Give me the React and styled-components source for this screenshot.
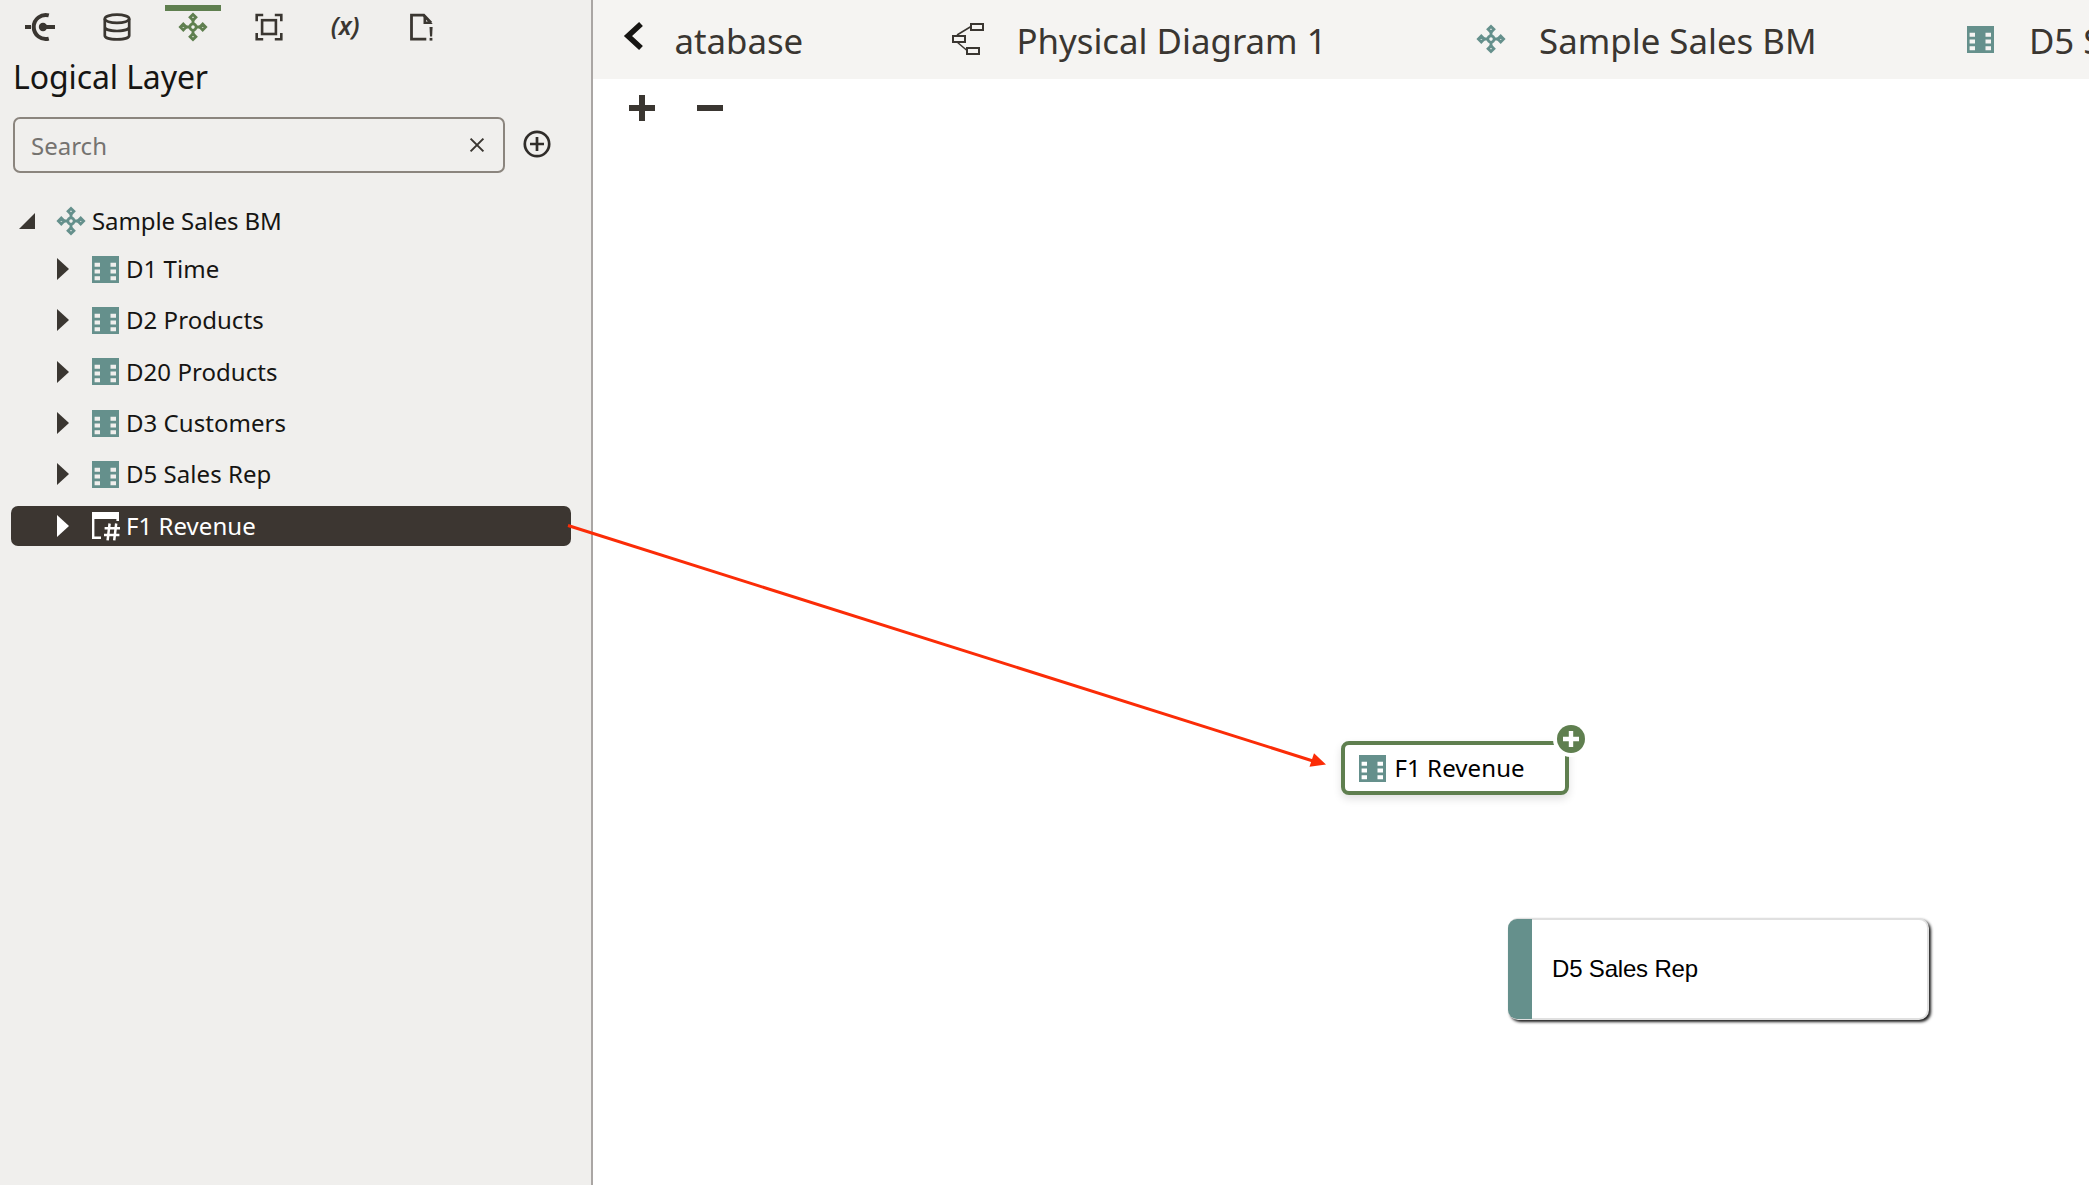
import React from "react";
import styled, { createGlobalStyle } from "styled-components";

const ink = "#3a3631";
const teal = "#65908c";
const green = "#5f7f4f";
const sans = `"Noto Sans", "Open Sans", sans-serif`;

const GlobalStyle = createGlobalStyle`
  * { box-sizing: border-box; }
  body { margin: 0; background: #fff; font-family: ${sans}; overflow: hidden; }
  svg { display: block; flex: none; overflow: visible; }
`;

const Page = styled.div`
  position: relative;
  display: flex;
  width: 2089px;
  height: 1185px;
  overflow: hidden;
`;

const Sidebar = styled.aside`
  flex: none;
  width: 593px;
  background: #f0efed;
  border-right: 2px solid #aaa6a4;
`;

const LayerTabs = styled.nav`
  display: flex;
  gap: 20.2px;
  height: 54px;
  padding: 5px 0 0 12.4px;
`;

const LayerTab = styled.div`
  display: flex;
  justify-content: center;
  width: 56px;
  height: 42px;
  padding-top: 1px;
  border-top: 6px solid ${(p) => (p.$active ? green : "transparent")};
`;

const Variable = styled.span`
  color: ${ink};
  font-size: 25px;
  font-style: italic;
  font-weight: 600;
  line-height: 27px;
`;

const Heading = styled.h1`
  margin: 0;
  padding-left: 13px;
  height: 63px;
  font-size: 32px;
  font-weight: 400;
  letter-spacing: -0.1px;
  line-height: 45px;
  color: #161513;
`;

const SearchRow = styled.div`
  display: flex;
  align-items: center;
  gap: 18px;
  height: 56px;
  padding-left: 13px;
`;

const SearchBox = styled.div`
  display: flex;
  align-items: center;
  justify-content: space-between;
  width: 492px;
  height: 56px;
  padding: 0 19px 0 16px;
  border: 2px solid #8b857e;
  border-radius: 7px;
  color: #757370;
  font-size: 24px;
`;

const AddButton = styled.div`
  padding-bottom: 2px;
`;

const Tree = styled.div`
  padding: 28px 20px 0 11px;
`;

const TreeRow = styled.div`
  display: flex;
  align-items: center;
  height: 40px;
  margin-bottom: ${(p) => (p.$root ? "8px" : "11.35px")};
  padding-left: ${(p) => (p.$root ? "8px" : "46px")};
  border-radius: 7px;
  font-size: 24px;
  letter-spacing: ${(p) => (p.$root ? "-0.1px" : "0.04px")};
  line-height: 40px;
  color: ${(p) => (p.$selected ? "#fff" : "#161513")};
  background: ${(p) => (p.$selected ? "#3c3631" : "transparent")};
`;

const Disclosure = styled.span`
  flex: none;
  width: ${(p) => (p.$root ? "38px" : "35px")};
  color: ${(p) => (p.$selected ? "#fff" : "#3a3631")};
`;

const RowIcon = styled.span`
  flex: none;
  width: ${(p) => (p.$root ? "35px" : "34px")};
`;

const Main = styled.main`
  flex: 1;
  min-width: 0;
`;

const TabBar = styled.header`
  display: flex;
  height: 79px;
  background: #f5f4f2;
`;

const BackButton = styled.div`
  flex: none;
  width: 80px;
  padding: 22px 0 0 31px;
`;

const TabStrip = styled.div`
  flex: 1;
  min-width: 0;
  display: flex;
  gap: 148.5px;
  overflow: hidden;
`;

const Tab = styled.div`
  flex: none;
  display: flex;
  gap: 32px;
  margin-left: ${(p) => (p.$scrolled ? "-24px" : "0")};
  padding-right: ${(p) => (p.$scrolled ? "0.7px" : "0")};
  color: ${ink};
  font-size: 34.8px;
  line-height: 81px;
  white-space: nowrap;
`;

const TabIcon = styled.span`
  display: flex;
  justify-content: center;
  align-items: center;
  width: 32px;
  height: 78px;
`;

const ZoomBar = styled.div`
  display: flex;
  gap: 42px;
  padding: 16px 0 0 36px;
`;

const NewNode = styled.div`
  position: absolute;
  left: 1341px;
  top: 741px;
  display: flex;
  align-items: center;
  gap: 8px;
  width: 228px;
  height: 54px;
  padding-left: 14.4px;
  border: 4px solid ${green};
  border-radius: 8px;
  background: #fff;
  box-shadow: 0 4px 8px rgba(0, 0, 0, 0.12);
  color: #000;
  font-size: 24px;
  letter-spacing: 0.1px;
  line-height: 46px;
`;

const NodeBadge = styled.span`
  position: absolute;
  right: -20px;
  top: -20px;
  display: flex;
  align-items: center;
  justify-content: center;
  width: 28px;
  height: 28px;
  border-radius: 50%;
  background: ${green};
  box-shadow: 0 0 0 4px #fff;
`;

const TableNode = styled.div`
  position: absolute;
  left: 1508px;
  top: 918px;
  display: flex;
  align-items: center;
  width: 421px;
  height: 102px;
  border: 2px solid #e0e0e0;
  border-left: 0;
  border-radius: 10px;
  background: #fff;
  box-shadow: 2px 2px 3px rgba(0, 0, 0, 0.9);
  color: #000;
  font: 24px "Liberation Sans", Arial, sans-serif;
  letter-spacing: -0.18px;
`;

const NodeStripe = styled.span`
  width: 24px;
  height: 100px;
  margin-right: 20px;
  border-radius: 9px 0 0 9px;
  background: ${teal};
`;

const DragArrow = styled.svg`
  position: absolute;
  left: 568px;
  top: 525px;
`;

function ConnectionIcon() {
  return (
    <svg width="30" height="30" viewBox="0 0 30 30" fill="none" stroke={ink} strokeWidth="4">
      <path d="M23.8 3.4A12 12 0 1 0 23.8 26.6M0 15H6M18 15H30" />
      <circle cx="18" cy="15" r="4.2" fill={ink} stroke="none" />
    </svg>
  );
}

function DatabaseIcon() {
  return (
    <svg width="30" height="30" viewBox="0 0 30 30" fill="none" stroke={ink} strokeWidth="2.7">
      <ellipse cx="15" cy="6.8" rx="12.2" ry="4.1" />
      <path d="M2.8 6.8V23.4C2.8 26 8 27.4 15 27.4S27.2 26 27.2 23.4V6.8M2.8 14.8C2.8 17.4 8 19 15 19S27.2 17.4 27.2 14.8" />
    </svg>
  );
}

function ModelIcon({ color }) {
  return (
    <svg width="28" height="30" viewBox="-14 -15 28 30" fill="none" stroke={color} strokeWidth="2.8">
      <path d="M0-12.6 2.9-9.7 0-6.8-2.9-9.7ZM0 12.6 2.9 9.7 0 6.8-2.9 9.7ZM-12.6 0-9.7 2.9-6.8 0-9.7-2.9ZM12.6 0 9.7 2.9 6.8 0 9.7-2.9Z" />
      <path d="M0-7V-3M0 7V3M-7 0H-3M7 0H3" />
      <circle r="3.1" />
    </svg>
  );
}

function FrameIcon() {
  return (
    <svg width="28" height="30" viewBox="0 0 28 30" fill="none" stroke={ink} strokeWidth="2.6">
      <path d="M1.7 9.2V3H8.2M19.8 3H26.3V9.2M26.3 21V27.3H19.8M8.2 27.3H1.7V21" />
      <rect x="7.1" y="8.2" width="13.8" height="13.8" />
    </svg>
  );
}

function DocumentIcon() {
  return (
    <svg width="24" height="30" viewBox="0 0 24 30" fill="none" stroke={ink}>
      <path d="M17.3 27.2H2.5V3.2H14.8L22 10.8" strokeWidth="2.8" />
      <path d="M14.5 2 23.4 11.5V12H14.5Z" fill={ink} stroke="none" />
      <path d="M17 7.7 18.8 9.5H17Z" fill="#f0efed" stroke="none" />
      <path d="M20.5 15H23.6L23.1 24.5H21Z" fill={ink} stroke="none" />
      <path d="M20.6 25.9H23.4V28.6H20.6Z" fill={ink} stroke="none" />
    </svg>
  );
}

function ClearIcon() {
  return (
    <svg width="14" height="14" viewBox="0 0 14 14" stroke={ink} strokeWidth="2">
      <path d="M.6 .6 13.4 13.4M13.4 .6 .6 13.4" />
    </svg>
  );
}

function CirclePlusIcon() {
  return (
    <svg width="28" height="28" viewBox="0 0 28 28" fill="none" stroke="#302d2a" strokeWidth="2.7">
      <circle cx="14" cy="14" r="12.2" />
      <path d="M7 14H21M14 7V21" />
    </svg>
  );
}

function TableIcon({ hole = "#f0efed" }) {
  return (
    <svg width="27" height="27" viewBox="0 0 27 27">
      <rect width="27" height="27" fill={teal} />
      <path
        fill={hole}
        d="M2.6 6.8H8V10.8H2.6ZM2.6 13.5H8V17.5H2.6ZM2.6 20.3H8V24.3H2.6ZM18.5 6.8H24V10.8H18.5ZM18.5 13.5H24V17.5H18.5ZM18.5 20.3H24V24.3H18.5Z"
      />
    </svg>
  );
}

function FactIcon() {
  return (
    <svg width="27" height="27" viewBox="0 0 27 27" fill="none" stroke="#fff">
      <path d="M0 0H27V9H24.4V7H2.4V24.4H9V27H0Z" fill="#fff" stroke="none" />
      <path d="M17.6 11.5 15.6 28.3M24.2 11.5 22.2 28.3M12.6 16.3H28M12 22.9H27.4" strokeWidth="2.5" />
    </svg>
  );
}

function DiagramIcon() {
  return (
    <svg width="32" height="32" viewBox="0 0 32 32" fill="none" stroke={ink} strokeWidth="2">
      <path d="M5 12 19 3.5M5 19 15 27.5" strokeWidth="1.5" />
      <path d="M19 1H31V7H19ZM1 13H13V19H1ZM15 25H27V31H15Z" />
    </svg>
  );
}

function ExpandedMark() {
  return (
    <svg width="16" height="16" viewBox="0 0 16 16" fill="currentColor">
      <path d="M16 0V16H0Z" />
    </svg>
  );
}

function CollapsedMark() {
  return (
    <svg width="12" height="22" viewBox="0 0 12 22" fill="currentColor">
      <path d="M0 0 12 11 0 22Z" />
    </svg>
  );
}

const tables = [
  { name: "D1 Time" },
  { name: "D2 Products" },
  { name: "D20 Products" },
  { name: "D3 Customers" },
  { name: "D5 Sales Rep" },
  { name: "F1 Revenue", fact: true },
];

const openTabs = [
  { name: "Physical Diagram 1", icon: <DiagramIcon /> },
  { name: "Sample Sales BM", icon: <ModelIcon color={teal} /> },
  { name: "D5 Sales Rep", icon: <TableIcon hole="#f5f4f2" /> },
];

export default function App() {
  return (
    <Page>
      <GlobalStyle />
      <Sidebar>
        <LayerTabs>
          <LayerTab><ConnectionIcon /></LayerTab>
          <LayerTab><DatabaseIcon /></LayerTab>
          <LayerTab $active><ModelIcon color={green} /></LayerTab>
          <LayerTab><FrameIcon /></LayerTab>
          <LayerTab><Variable>(x)</Variable></LayerTab>
          <LayerTab><DocumentIcon /></LayerTab>
        </LayerTabs>
        <Heading>Logical Layer</Heading>
        <SearchRow>
          <SearchBox>
            Search
            <ClearIcon />
          </SearchBox>
          <AddButton><CirclePlusIcon /></AddButton>
        </SearchRow>
        <Tree>
          <TreeRow $root>
            <Disclosure $root><ExpandedMark /></Disclosure>
            <RowIcon $root><ModelIcon color={teal} /></RowIcon>
            Sample Sales BM
          </TreeRow>
          {tables.map(({ name, fact }) => (
            <TreeRow key={name} $selected={fact}>
              <Disclosure $selected={fact}><CollapsedMark /></Disclosure>
              <RowIcon>{fact ? <FactIcon /> : <TableIcon />}</RowIcon>
              {name}
            </TreeRow>
          ))}
        </Tree>
      </Sidebar>
      <Main>
        <TabBar>
          <BackButton>
            <svg width="19" height="28" viewBox="0 0 19 28" fill="none" stroke="#161513" strokeWidth="5.6">
              <path d="M17 2 4 14 17 26" />
            </svg>
          </BackButton>
          <TabStrip>
            <Tab $scrolled>Database</Tab>
            {openTabs.map(({ name, icon }) => (
              <Tab key={name}>
                <TabIcon>{icon}</TabIcon>
                {name}
              </Tab>
            ))}
          </TabStrip>
        </TabBar>
        <ZoomBar>
          <svg width="26" height="26" viewBox="0 0 26 26" fill={ink}>
            <path d="M10 0H16V10H26V16H16V26H10V16H0V10H10Z" />
          </svg>
          <svg width="26" height="26" viewBox="0 0 26 26" fill={ink}>
            <path d="M0 10H26V16H0Z" />
          </svg>
        </ZoomBar>
      </Main>
      <NewNode>
        <TableIcon hole="#fff" />
        F1 Revenue
        <NodeBadge>
          <svg width="16" height="16" viewBox="0 0 16 16" fill="#fff">
            <path d="M5.8 0H10.2V5.8H16V10.2H10.2V16H5.8V10.2H0V5.8H5.8Z" />
          </svg>
        </NodeBadge>
      </NewNode>
      <TableNode>
        <NodeStripe />
        D5 Sales Rep
      </TableNode>
      <DragArrow width="758" height="243" viewBox="0 0 758 243">
        <path d="M0 .5 745 236" stroke="#fb2c07" strokeWidth="3" />
        <path d="M746 228.3 758 239.5 741.5 241.7Z" fill="#fb2c07" />
      </DragArrow>
    </Page>
  );
}
